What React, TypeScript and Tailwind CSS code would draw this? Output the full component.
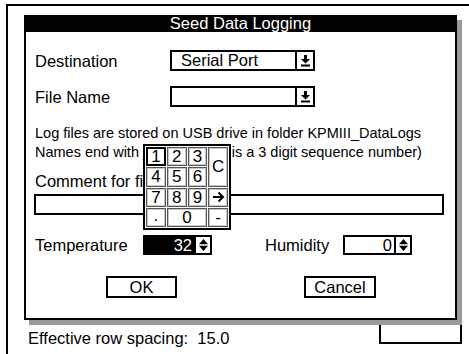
import React from "react";

const font = { fontFamily: '"Liberation Sans", Arial, sans-serif' };

function DropArrow() {
  return (
    <svg width="11" height="13" viewBox="0 0 11 13">
      <path d="M4 1h3v4h3L5.5 9.5 1 5h3z" fill="black" />
      <rect x="1" y="10.5" width="9" height="2" fill="black" />
    </svg>
  );
}

function SpinArrows() {
  return (
    <svg width="11" height="14" viewBox="0 0 11 14">
      <path d="M5.5 1L10 6.2H1z" fill="black" />
      <path d="M1 7.8h9l-4.5 5.2z" fill="black" />
    </svg>
  );
}

function ArrowRight() {
  return (
    <svg width="13" height="12" viewBox="0 0 13 12">
      <path d="M1 6h10M6.5 1.5L11 6l-4.5 4.5" stroke="black" strokeWidth="2" fill="none" />
    </svg>
  );
}

function Dropdown({ value }: { value: string }) {
  return (
    <div className="flex h-[21px] w-[145px] border-2 border-black bg-white">
      <div className="flex-1 pl-[9px] leading-[17px]">{value}</div>
      <div className="flex w-[18px] items-center justify-center border-l-2 border-black">
        <DropArrow />
      </div>
    </div>
  );
}

function Spinner({ value, active }: { value: string; active?: boolean }) {
  return (
    <div className={`flex h-[20px] w-[69px] border-2 border-black ${active ? "bg-black text-white" : "bg-white"}`}>
      <div className="flex-1 pr-[2px] text-right leading-[16px]">{value}</div>
      <div className="flex w-[16px] items-center justify-center border-l-2 border-black bg-white">
        <SpinArrows />
      </div>
    </div>
  );
}

function Key({ children, cls = "", selected }: { children: React.ReactNode; cls?: string; selected?: boolean }) {
  return (
    <div
      className={`flex items-center justify-center bg-white leading-none ${
        selected ? "border-2 border-black" : "border border-[#555] shadow-[inset_0_0_0_1px_#c8c8c8]"
      } ${cls}`}
    >
      {children}
    </div>
  );
}

export default function App() {
  return (
    <div className="relative h-[354px] w-[469px] overflow-hidden bg-white text-black" style={font}>
      {/* window behind the dialog */}
      <div className="ml-[6px] mt-[4px] h-[360px] border-l-2 border-t-2 border-black">
        <div className="flex items-start justify-between pr-[7px]">
          <div className="mt-[322px] whitespace-pre pl-[20px] text-[16.5px] leading-[20px]">Effective row spacing:  15.0</div>
          <div className="mt-[286px] h-[52px] w-[83px] border-2 border-black" />
        </div>
      </div>

      {/* dialog */}
      <div className="absolute left-[24px] top-[15px] flex h-[305px] w-[433px] flex-col border-2 border-black bg-white text-[16.5px] shadow-[5px_5px_0_#999]">
        <div className="h-[15px] bg-black text-center leading-[13px] text-white">Seed Data Logging</div>

        <div className="mt-[18px] flex h-[21px] items-center pl-[9px]">
          <div className="w-[135px] leading-[20px]">Destination</div>
          <Dropdown value="Serial Port" />
        </div>
        <div className="mt-[15px] flex h-[21px] items-center pl-[9px]">
          <div className="w-[135px] leading-[20px]">File Name</div>
          <Dropdown value="" />
        </div>

        <div className="mt-[17px] pl-[9px] text-[14.5px] leading-[19px]">
          <div>Log files are stored on USB drive in folder KPMIII_DataLogs</div>
          <div>Names end with _###.txt (### is a 3 digit sequence number)</div>
        </div>

        <div className="mt-[10px] h-[19px] pl-[9px] leading-[19px]">Comment for file</div>
        <div className="ml-[8px] mt-[3px] h-[21px] w-[410px] border-2 border-black" />

        <div className="mt-[20px] flex h-[20px] items-center pl-[9px]">
          <div className="w-[108px] leading-[20px]">Temperature</div>
          <Spinner value="32" active />
          <div className="ml-[53px] w-[78px] leading-[20px]">Humidity</div>
          <Spinner value="0" />
        </div>

        <div className="mt-[21px] flex">
          <button className="ml-[80px] h-[22px] w-[71px] border-2 border-black leading-[18px]">OK</button>
          <button className="ml-[127px] h-[22px] w-[72px] border-2 border-black leading-[18px]">Cancel</button>
        </div>
      </div>

      {/* numeric keypad popup */}
      <div className="absolute left-[143px] top-[144px] grid h-[86px] w-[88px] grid-cols-4 grid-rows-4 gap-[1px] border-2 border-black bg-white p-[1px] text-[17px]">
        <Key selected>1</Key>
        <Key>2</Key>
        <Key>3</Key>
        <Key cls="row-span-2">C</Key>
        <Key>4</Key>
        <Key>5</Key>
        <Key>6</Key>
        <Key>7</Key>
        <Key>8</Key>
        <Key>9</Key>
        <Key>
          <ArrowRight />
        </Key>
        <Key cls="items-end pb-[2px]">.</Key>
        <Key cls="col-span-2">0</Key>
        <Key>-</Key>
      </div>
    </div>
  );
}
